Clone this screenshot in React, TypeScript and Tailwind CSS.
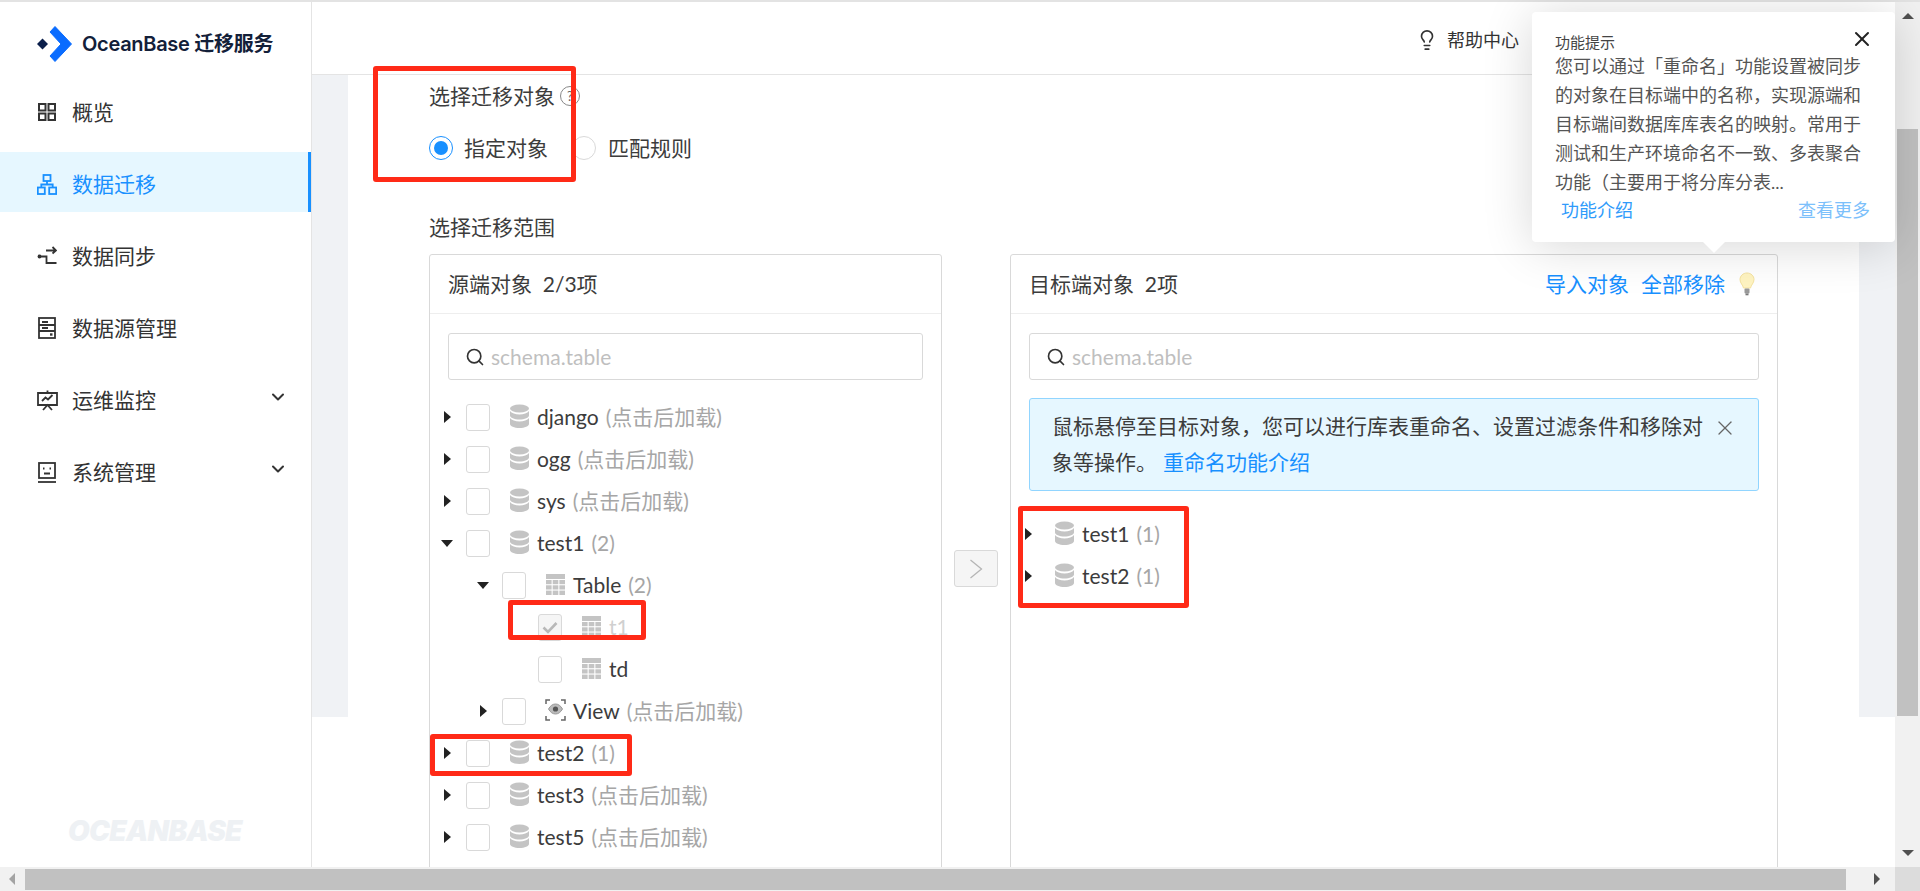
import type { ReactNode } from "react";
import { ChevronDown, Search, X, Lightbulb } from "lucide-react";

const FONT = "font-['Lato','Noto_Sans_CJK_SC',sans-serif]";

const GridIcon = () => (
  <svg width="20" height="20" viewBox="0 0 20 20" fill="none" stroke="#333" strokeWidth="2">
    <rect x="2" y="2" width="6.500" height="6.500" />
    <rect x="11.500" y="2" width="6.500" height="6.500" />
    <rect x="2" y="11.500" width="6.500" height="6.500" />
    <rect x="11.500" y="11.500" width="6.500" height="6.500" />
  </svg>
);

const ClusterIcon = () => (
  <svg width="20" height="21" viewBox="0 0 20 21" fill="none" stroke="#1890ff" strokeWidth="1.800">
    <rect x="6.500" y="1" width="7" height="6" />
    <rect x="0.800" y="13.500" width="7" height="6.500" />
    <rect x="12.200" y="13.500" width="7" height="6.500" />
    <path d="M10 7v3.500M4.300 13.500v-3h11.400v3" />
  </svg>
);

const SyncIcon = () => (
  <svg width="20" height="20" viewBox="0 0 20 20" fill="none" stroke="#333" strokeWidth="1.800">
    <circle cx="2.500" cy="10.500" r="1.900" fill="#333" stroke="none" />
    <path d="M2 10.500h7.500V17H19.500" />
    <path d="M9 4.500h10M15.500 1l3.500 3.500-3.500 3" />
  </svg>
);

const ServerIcon = () => (
  <svg width="20" height="22" viewBox="0 0 20 22" fill="none" stroke="#333" strokeWidth="1.800">
    <rect x="2" y="1" width="16" height="20" />
    <path d="M2 8h16M2 14h16M5 5h6M5 11h6" />
    <path d="M13 17.500h2.500" strokeWidth="2.400" />
  </svg>
);

const MonitorIcon = () => (
  <svg width="21" height="21" viewBox="0 0 21 21" fill="none" stroke="#333" strokeWidth="1.800">
    <path d="M10.500 0.500v2.500M1 3h19v12H1zM6 20l4.500-5 4.500 5" />
    <path d="M5 11l3.500-3.500 2.500 2 4.500-4.500" />
  </svg>
);

const RobotIcon = () => (
  <svg width="20" height="21" viewBox="0 0 20 21" fill="none" stroke="#333" strokeWidth="1.800">
    <rect x="2" y="1" width="16" height="15" />
    <path d="M1 20h18" />
    <path d="M6 6.500h1.500M12.500 6.500H14M7 11.500h6" />
  </svg>
);

const DbIcon = () => (
  <svg width="21" height="25" viewBox="0 0 21 25" fill="#c4c4c4">
    <ellipse cx="10.500" cy="4.500" rx="9.500" ry="4" />
    <path d="M1 7v4.500c0 2.300 4.200 4 9.500 4s9.500-1.700 9.500-4V7c-1.600 2.200-5.300 3.400-9.500 3.400S2.600 9.200 1 7z" />
    <path d="M1 14v6c0 2.300 4.200 4 9.500 4s9.500-1.700 9.500-4v-6c-1.600 2.200-5.300 3.400-9.500 3.400S2.600 16.200 1 14z" />
  </svg>
);

const TableIcon = () => (
  <svg width="19" height="21" viewBox="0 0 19 21" fill="#c4c4c4">
    <rect x="0" y="0" width="19" height="5" />
    <rect x="0" y="6" width="5.600" height="4.200" />
    <rect x="6.700" y="6" width="5.600" height="4.200" />
    <rect x="13.400" y="6" width="5.600" height="4.200" />
    <rect x="0" y="11.300" width="5.600" height="4.200" />
    <rect x="6.700" y="11.300" width="5.600" height="4.200" />
    <rect x="13.400" y="11.300" width="5.600" height="4.200" />
    <rect x="0" y="16.600" width="5.600" height="4.400" />
    <rect x="6.700" y="16.600" width="5.600" height="4.400" />
    <rect x="13.400" y="16.600" width="5.600" height="4.400" />
  </svg>
);

const ViewIcon = () => (
  <svg width="21" height="22" viewBox="0 0 21 22" fill="none" stroke="#666" strokeWidth="1.500">
    <path d="M1 5V1h4M16 1h4v4M1 17v4h4M16 21h4v-4" />
    <path d="M3.500 10c2-3.500 4.300-5 7-5s5 1.500 7 5c-2 3.500-4.300 5-7 5s-5-1.500-7-5z" fill="#bbb" stroke="#999" strokeWidth="1" />
    <circle cx="10.500" cy="10" r="2.600" fill="#555" stroke="none" />
  </svg>
);

const ColorBulb = () => (
  <svg width="16" height="24" viewBox="0 0 16 24">
    <path d="M8 1C4 1 1 4 1 7.500c0 3.500 3 5.500 3.500 8.500h7C12 13 15 11 15 7.500 15 4 12 1 8 1z" fill="#fff4c2" stroke="#f5e3a0" strokeWidth="1" />
    <rect x="5.500" y="16.500" width="5" height="5" rx="1" fill="#9a9a9a" />
    <rect x="6.500" y="21.500" width="3" height="1.800" fill="#777" />
  </svg>
);

const Logo = () => (
  <svg width="36" height="36" viewBox="0 0 36 36">
    <path d="M1 18l5.500-5.500L12 18l-5.500 5.500z" fill="#0b1f4b" />
    <path d="M14 6l5-5.500L35.500 18 19 35.500 14 30l11-12z" fill="#0a6cff" stroke="#0a6cff" strokeLinejoin="round" />
  </svg>
);

const Arrow = ({ open }: { open?: boolean }) =>
  open ? (
    <span className="w-0 h-0 -ml-[3px] border-x-[6px] border-x-transparent border-t-[7px] border-t-[#222]" />
  ) : (
    <span className="w-0 h-0 border-y-[6px] border-y-transparent border-l-[7px] border-l-[#222]" />
  );

const Checkbox = ({ checked }: { checked?: boolean }) => (
  <span
    className={`w-[24px] h-[27px] rounded-[3px] border border-[#d9d9d9] flex items-center justify-center shrink-0 ${checked ? "bg-[#f5f5f5]" : "bg-white"}`}
  >
    {checked && (
      <svg width="16" height="13" viewBox="0 0 16 13" fill="none" stroke="#b8b8b8" strokeWidth="2.600">
        <path d="M1.500 6.500l4.500 4.500 8.500-9" />
      </svg>
    )}
  </span>
);

type RowProps = {
  level?: number;
  open?: boolean;
  leaf?: boolean;
  check?: "none" | "on" | "off";
  icon: ReactNode;
  name: string;
  note?: string;
  muted?: boolean;
};

const indent = ["pl-[8px]", "pl-[44px]", "pl-[80px]"];

function TreeRow({ level = 0, open, leaf, check = "off", icon, name, note, muted }: RowProps) {
  return (
    <div className={`h-[42px] flex items-center ${indent[level]}`}>
      <span className="w-[28px] pl-[6px] flex items-center shrink-0">{!leaf && <Arrow open={open} />}</span>
      {check !== "none" && <Checkbox checked={check === "on"} />}
      <span className={`flex justify-center items-center shrink-0 w-[21px] -mt-[2px] ${check === "none" ? "ml-[7px]" : "ml-[19px]"}`}>
        {icon}
      </span>
      <span className={`ml-[7px] text-[21px] whitespace-nowrap ${muted ? "text-[#d0d0d0]" : "text-[#3c3c3c]"}`}>{name}</span>
      {note && <span className="ml-[7px] text-[21px] text-[#a6a6a6] whitespace-nowrap">{note}</span>}
    </div>
  );
}

const SearchBox = () => (
  <div className="h-[47px] border border-[#d9d9d9] rounded-[3px] flex items-center pl-[16px] gap-[6px]">
    <Search size={20} strokeWidth={2} className="text-[#333]" />
    <span className="text-[21px] text-[#bfbfbf]">schema.table</span>
  </div>
);

const menu = [
  { icon: <GridIcon />, label: "概览" },
  { icon: <ClusterIcon />, label: "数据迁移", active: true },
  { icon: <SyncIcon />, label: "数据同步" },
  { icon: <ServerIcon />, label: "数据源管理" },
  { icon: <MonitorIcon />, label: "运维监控", more: true },
  { icon: <RobotIcon />, label: "系统管理", more: true },
];

function Sidebar() {
  return (
    <aside className="w-[312px] shrink-0 border-r border-[#e4e4e4] bg-white flex flex-col relative">
      <div className="h-[78px] flex items-center pl-[36px] pt-[6px] gap-[10px]">
        <Logo />
        <span className="font-['Inter','Noto_Sans_CJK_SC',sans-serif] font-semibold text-[20px] tracking-[-0.3px] text-[#132039] whitespace-nowrap">
          OceanBase 迁移服务
        </span>
      </div>
      <nav className="flex flex-col gap-[12px]">
        {menu.map((m) => (
          <div
            key={m.label}
            className={`h-[60px] flex items-center pl-[36px] pr-[16px] pt-[4px] ${m.active ? "bg-[#e6f7ff] border-r-[3px] border-[#1890ff] text-[#1890ff]" : "text-[#333]"}`}
          >
            <span className="w-[22px] flex justify-center shrink-0">{m.icon}</span>
            <span className="ml-[14px] text-[21px] flex-1">{m.label}</span>
            {m.more && <ChevronDown size={20} strokeWidth={2.400} className="text-[#333] mr-[7px] -mt-[6px]" />}
          </div>
        ))}
      </nav>
      <span className="absolute left-[68px] bottom-[22px] text-[28px] leading-none font-black italic tracking-tight font-['Inter',sans-serif] text-[#eef1f4]">
        OCEANBASE
      </span>
    </aside>
  );
}

function Popover() {
  return (
    <div className="absolute left-[1532px] top-[12px] w-[363px] h-[230px] bg-white rounded-[4px] shadow-[0_4px_50px_rgba(0,0,0,0.16)] z-20 pl-[23px] pr-[24px] pt-[21px]">
      <X size={24} strokeWidth={2} className="absolute right-[21px] top-[15px] text-[#222]" />
      <div className="text-[15px] leading-[19px] text-[#444]">功能提示</div>
      <p className="text-[18px] leading-[29px] text-[#555] break-all">
        您可以通过「重命名」功能设置被同步的对象在目标端中的名称，实现源端和目标端间数据库库表名的映射。常用于测试和生产环境命名不一致、多表聚合功能（主要用于将分库分表...
      </p>
      <div className="flex justify-between text-[18px] leading-[26px] pl-[6px] pr-[1px]">
        <span className="text-[#2f9bfb]">功能介绍</span>
        <span className="text-[#7cc0fb]">查看更多</span>
      </div>
      <span className="absolute left-[170px] -bottom-[11px] w-0 h-0 border-x-[12px] border-x-transparent border-t-[12px] border-t-white" />
    </div>
  );
}

function Header() {
  return (
    <header className="h-[73px] shrink-0 border-b border-[#e4e4e4] bg-white flex items-center pl-[1104px] pt-[4px]">
      <Lightbulb size={22} strokeWidth={1.800} className="text-[#333]" />
      <span className="ml-[9px] text-[18px] text-[#333] whitespace-nowrap">帮助中心</span>
    </header>
  );
}

function SourcePanel() {
  const db = <DbIcon />;
  const tb = <TableIcon />;
  return (
    <section className="w-[513px] h-[640px] shrink-0 border border-[#d9d9d9] rounded-[3px] bg-white flex flex-col">
      <div className="h-[59px] shrink-0 border-b border-[#eeeeee] flex items-center pl-[18px] text-[21px] text-[#3c3c3c] whitespace-pre">
        源端对象  2/3项
      </div>
      <div className="px-[18px] pt-[19px]">
        <SearchBox />
      </div>
      <div className="pt-[16px]">
        <TreeRow icon={db} name="django" note="(点击后加载)" />
        <TreeRow icon={db} name="ogg" note="(点击后加载)" />
        <TreeRow icon={db} name="sys" note="(点击后加载)" />
        <TreeRow open icon={db} name="test1" note="(2)" />
        <TreeRow level={1} open icon={tb} name="Table" note="(2)" />
        <TreeRow level={2} leaf check="on" icon={tb} name="t1" muted />
        <TreeRow level={2} leaf icon={tb} name="td" />
        <TreeRow level={1} icon={<ViewIcon />} name="View" note="(点击后加载)" />
        <TreeRow icon={db} name="test2" note="(1)" />
        <TreeRow icon={db} name="test3" note="(点击后加载)" />
        <TreeRow icon={db} name="test5" note="(点击后加载)" />
      </div>
    </section>
  );
}

function TargetPanel() {
  return (
    <section className="w-[768px] h-[640px] shrink-0 border border-[#d9d9d9] rounded-[3px] bg-white flex flex-col">
      <div className="h-[59px] shrink-0 border-b border-[#eeeeee] flex items-center pl-[18px] pr-[22px] text-[21px] text-[#3c3c3c]">
        <span className="flex-1 whitespace-pre">目标端对象  2项</span>
        <span className="text-[#1890ff]">导入对象</span>
        <span className="text-[#1890ff] ml-[12px]">全部移除</span>
        <span className="ml-[14px] flex"><ColorBulb /></span>
      </div>
      <div className="px-[18px] pt-[19px]">
        <SearchBox />
        <div className="mt-[18px] h-[93px] bg-[#e6f7ff] border border-[#91d5ff] rounded-[3px] pl-[22px] pr-[21px] pt-[9px] flex">
          <p className="flex-1 text-[21px] leading-[36px] text-[#3c3c3c]">
            鼠标悬停至目标对象，您可以进行库表重命名、设置过滤条件和移除对象等操作。
            <span className="ml-[6px] text-[#1890ff]">重命名功能介绍</span>
          </p>
          <X size={24} strokeWidth={1.300} className="text-[#666] mt-[8px] -ml-[2px] shrink-0" />
        </div>
      </div>
      <div className="pt-[22px]">
        <TreeRow check="none" icon={<DbIcon />} name="test1" note="(1)" />
        <TreeRow check="none" icon={<DbIcon />} name="test2" note="(1)" />
      </div>
    </section>
  );
}

function Content() {
  return (
    <div className="h-[642px] bg-[#f0f2f5] pl-[36px]">
      <div className="w-[1511px] h-[820px] bg-white pl-[81px] pt-[7px]">
        <div className="flex items-center h-[28px] text-[21px] text-[#3c3c3c]">
          选择迁移对象
          <span className="ml-[5px] w-[20px] h-[20px] rounded-full border border-[#888] text-[13px] leading-none flex items-center justify-center text-[#666]">?</span>
        </div>
        <div className="flex items-center mt-[24px] h-[28px] text-[21px] text-[#3c3c3c]">
          <span className="w-[24px] h-[24px] rounded-full border border-[#1890ff] flex items-center justify-center">
            <span className="w-[14px] h-[14px] rounded-full bg-[#1890ff]" />
          </span>
          <span className="ml-[11px]">指定对象</span>
          <span className="ml-[24px] w-[24px] h-[24px] rounded-full border border-[#d9d9d9]" />
          <span className="ml-[12px]">匹配规则</span>
        </div>
        <div className="mt-[51px] h-[28px] flex items-center text-[21px] text-[#3c3c3c]">选择迁移范围</div>
        <div className="flex mt-[13px]">
          <SourcePanel />
          <div className="w-[68px] shrink-0 flex justify-center pt-[296px]">
            <span className="w-[44px] h-[37px] border border-[#d9d9d9] rounded-[3px] bg-[#f5f5f5] flex items-center justify-center">
              <svg width="14" height="20" viewBox="0 0 14 20" fill="none" stroke="#b5b5b5" strokeWidth="1.300">
                <path d="M1.500 1l11 9-11 9" />
              </svg>
            </span>
          </div>
          <TargetPanel />
        </div>
      </div>
    </div>
  );
}

const Box = ({ className }: { className: string }) => (
  <div className={`absolute border-[5px] border-[#ff2a17] rounded-[3px] z-30 ${className}`} />
);

export default function App() {
  return (
    <div className={`${FONT} relative w-[1920px] h-[891px] overflow-hidden bg-white flex flex-col`}>
      <div className="h-[2px] shrink-0 bg-[#e3e3e3]" />
      <div className="flex flex-1 min-h-0">
        <Sidebar />
        <main className="flex-1 min-w-0 flex flex-col overflow-hidden">
          <Header />
          <Content />
        </main>
        {/* vertical scrollbar */}
        <div className="w-[25px] shrink-0 bg-[#f1f1f1] flex flex-col items-center">
          <span className="mt-[11px] w-0 h-0 border-x-[6px] border-x-transparent border-b-[6px] border-b-[#505050]" />
          <span className="mt-[110px] w-[21px] h-[587px] bg-[#c1c1c1]" />
          <span className="mt-auto mb-[11px] w-0 h-0 border-x-[6px] border-x-transparent border-t-[6px] border-t-[#505050]" />
        </div>
      </div>
      {/* horizontal scrollbar */}
      <div className="h-[24px] shrink-0 bg-[#f1f1f1] flex items-center">
        <span className="ml-[9px] w-0 h-0 border-y-[6px] border-y-transparent border-r-[6px] border-r-[#a3a3a3]" />
        <span className="ml-[10px] w-[1821px] h-[21px] bg-[#c1c1c1]" />
        <span className="ml-[28px] w-0 h-0 border-y-[6px] border-y-transparent border-l-[6px] border-l-[#505050]" />
        <span className="ml-auto w-[25px] h-full bg-[#dcdcdc]" />
      </div>
      <Popover />
      <Box className="left-[373px] top-[66px] w-[203px] h-[116px]" />
      <Box className="left-[508px] top-[600px] w-[138px] h-[40px]" />
      <Box className="left-[430px] top-[734px] w-[202px] h-[42px]" />
      <Box className="left-[1018px] top-[506px] w-[171px] h-[102px]" />
    </div>
  );
}
